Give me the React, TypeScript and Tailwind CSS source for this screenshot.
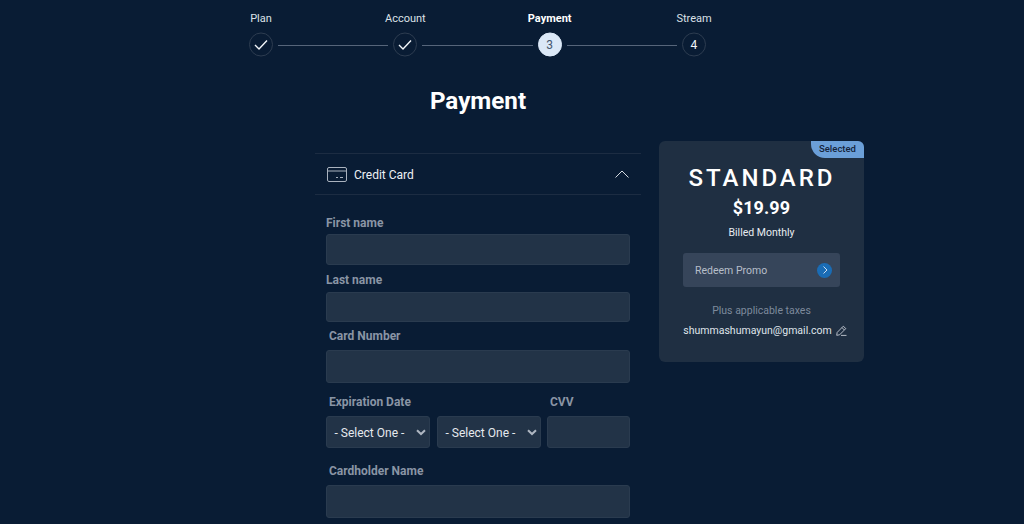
import React from "react";

function Check() {
  return (
    <svg width="14" height="14" viewBox="0 0 14 14" fill="none" stroke="#f1f5f9" strokeWidth="1.4">
      <path d="M1 7.5 L5 11.5 L13 3" />
    </svg>
  );
}

function Step({ label, bold, children, active }: { label: string; bold?: boolean; children: React.ReactNode; active?: boolean }) {
  return (
    <div className="relative w-6 h-6 shrink-0">
      <div className={`absolute left-1/2 -translate-x-1/2 -top-[23px] whitespace-nowrap text-[11px] leading-[18px] ${bold ? "font-bold text-white" : "text-[#dbe1e8]"}`}>{label}</div>
      <div className={`w-6 h-6 -translate-y-[0.5px] rounded-full flex items-center justify-center text-[12px] border ${active ? "bg-[#dbe8f7] border-[#dbe8f7] text-[#44566f]" : "border-[#2d3c50] text-[#f1f5f9]"}`}>{children}</div>
    </div>
  );
}

const Line = () => <div className="h-px w-[110.33px] mx-[5px] bg-[#56657a]" />;

function Label({ children, shift }: { children: React.ReactNode; shift?: boolean }) {
  return <div className={`text-[12px] leading-[16px] font-bold text-[#8a95a5] ${shift ? "pl-[3px]" : ""}`}>{children}</div>;
}

const Input = ({ h }: { h: string }) => (
  <div className={`${h} w-full rounded-[3px] bg-[#223347] border border-[#2a3b4f]`} />
);

function Select() {
  return (
    <div className="w-[104px] h-[32px] shrink-0 rounded-[3px] bg-[#223347] border border-[#2a3b4f] flex items-center justify-between pl-[8px] pr-[3px] text-[12px] text-[#e5e9ee]">
      <span className="pt-px">- Select One -</span>
      <svg width="10" height="7" viewBox="0 0 10 7" fill="none" stroke="#aeb6c1" strokeWidth="2">
        <path d="M1 1.2 L5 5 L9 1.2" />
      </svg>
    </div>
  );
}

export default function App() {
  return (
    <div className="h-[524px] w-[1024px] overflow-hidden bg-[#091c34] font-['Roboto',sans-serif]">
      <div className="pt-[33px] pl-[249px] flex items-center w-fit">
        <Step label="Plan"><Check /></Step>
        <Line />
        <Step label="Account"><Check /></Step>
        <Line />
        <Step label="Payment" bold active>3</Step>
        <Line />
        <Step label="Stream">4</Step>
      </div>
      <h1 className="mt-[30px] w-[956px] text-center text-[24.2px] leading-[28px] font-bold text-white">Payment</h1>
      <div className="mt-[26px] ml-[315px] flex items-start gap-[18px]">
        <div className="w-[326px]">
          <div className="mt-[12px] h-[42px] border-y border-[#1c2c42] flex items-center justify-between pl-[12px] pr-[12px]">
            <div className="flex items-center gap-[7px]">
              <svg width="20" height="15" viewBox="0 0 20 15" fill="none" stroke="#aab3bf" strokeWidth="1">
                <rect x="0.5" y="0.5" width="19" height="14" rx="1.5" />
                <path d="M0.5 4 H19.5" />
                <path d="M9 10.5 H11 M13 10.5 H16" />
              </svg>
              <span className="text-[12px] leading-[18px] pt-px text-[#eef1f5]">Credit Card</span>
            </div>
            <svg width="14" height="8" viewBox="0 0 14 8" fill="none" stroke="#d5dae1" strokeWidth="1">
              <path d="M0.5 7.5 L7 1 L13.5 7.5" />
            </svg>
          </div>
          <div className="pl-[11px] pr-[11px] pt-[20px]">
            <Label>First name</Label>
            <div className="mt-[3px]"><Input h="h-[31px]" /></div>
            <div className="mt-[7px]"><Label>Last name</Label></div>
            <div className="mt-[4px]"><Input h="h-[30px]" /></div>
            <div className="mt-[6px]"><Label shift>Card Number</Label></div>
            <div className="mt-[6px] -ml-[0.5px]"><Input h="h-[33px]" /></div>
            <div className="mt-[11px] flex">
              <div className="w-[224px]"><Label shift>Expiration Date</Label></div>
              <Label>CVV</Label>
            </div>
            <div className="mt-[6px] -ml-[0.5px] flex">
              <Select />
              <div className="ml-[7px]"><Select /></div>
              <div className="ml-[6px] flex-1"><Input h="h-[32px]" /></div>
            </div>
            <div className="mt-[15px]"><Label shift>Cardholder Name</Label></div>
            <div className="mt-[6px] -ml-[0.5px]"><Input h="h-[33px]" /></div>
          </div>
        </div>
        <div className="relative w-[205px] h-[221px] rounded-[6px] bg-[#1f2f42] flex flex-col items-center">
          <div className="absolute top-0 right-0 h-[17px] w-[53px] bg-[#6b9fd8] rounded-tr-[6px] rounded-bl-[14px] text-[9.5px] leading-[16px] font-medium text-[#14233a] text-center">Selected</div>
          <div className="mt-[21px] text-[24px] leading-[32px] font-medium tracking-[3px] text-white pl-[1px]">STANDARD</div>
          <div className="mt-[3px] text-[18px] leading-[22px] font-bold tracking-[0.1px] text-white">$19.99</div>
          <div className="mt-[6px] text-[10.5px] leading-[16px] text-[#e8ecf1]">Billed Monthly</div>
          <div className="mt-[12px] w-[157px] h-[34px] rounded-[3px] bg-[#36455a] flex items-center justify-between pl-[12px] pr-[8px]">
            <span className="text-[10.5px] pt-px text-[#b6bec9]">Redeem Promo</span>
            <span className="w-[15px] h-[15px] rounded-full bg-[#1a6cb5] flex items-center justify-center">
              <svg width="6" height="8" viewBox="0 0 6 8" fill="none" stroke="#cfe0f2" strokeWidth="1">
                <path d="M1.5 0.5 L5 4 L1.5 7.5" />
              </svg>
            </span>
          </div>
          <div className="mt-[16px] text-[10.5px] leading-[16px] text-[#7d8a9c]">Plus applicable taxes</div>
          <div className="mt-[4px] pl-[7px] flex items-center gap-[4px] text-[10.5px] leading-[16px] text-[#dfe4ea]">
            <span>shummashumayun@gmail.com</span>
            <svg className="-mt-[2px]" width="11" height="11" viewBox="0 0 11 11" fill="none" stroke="#c6ccd5" strokeWidth="0.9">
              <path d="M0.7 10.3 L1.2 7.4 L7.3 1.2 L9.8 3.6 L3.6 9.8 Z" />
              <path d="M6 2.6 L8.4 5" />
              <path d="M5 10.4 H10.5" />
            </svg>
          </div>
        </div>
      </div>
    </div>
  );
}
